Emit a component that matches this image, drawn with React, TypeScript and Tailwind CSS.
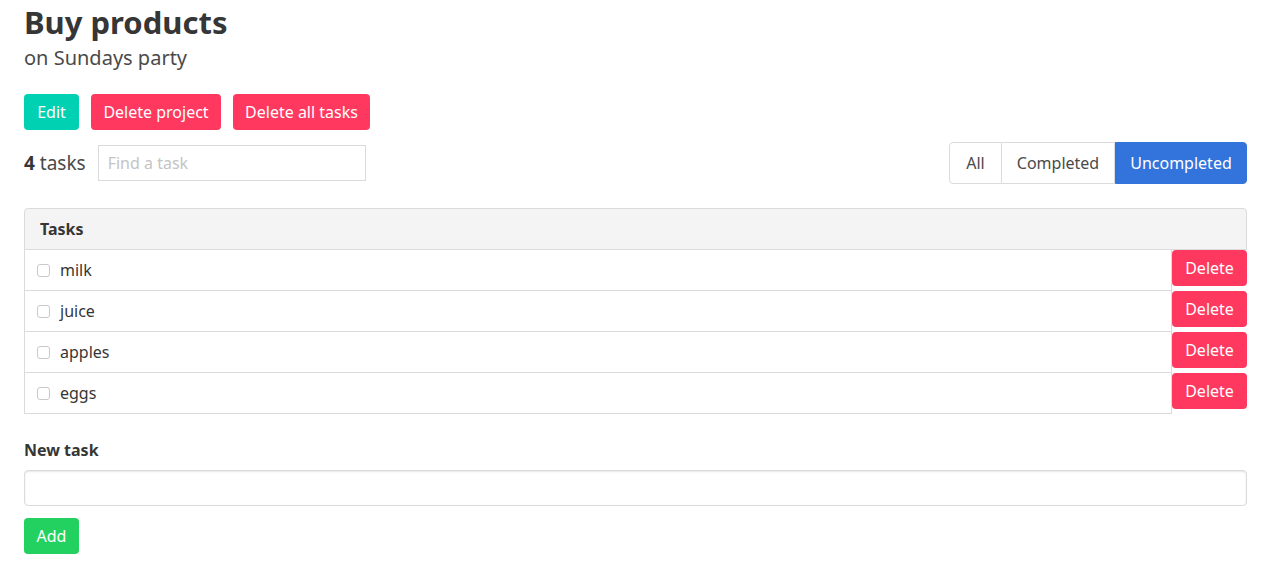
import React, { useState } from 'react';

type Task = { id: number; name: string; done: boolean };

const initialTasks: Task[] = [
  { id: 1, name: 'milk', done: false },
  { id: 2, name: 'juice', done: false },
  { id: 3, name: 'apples', done: false },
  { id: 4, name: 'eggs', done: false },
];

const filters = [
  { name: 'All', width: 'w-[53px]' },
  { name: 'Completed', width: 'w-[113px]' },
  { name: 'Uncompleted', width: 'w-[132px]' },
];

const App: React.FC = () => {
  const [tasks, setTasks] = useState<Task[]>(initialTasks);
  const [filter, setFilter] = useState('Uncompleted');
  const [query, setQuery] = useState('');
  const [newTask, setNewTask] = useState('');

  const visible = tasks.filter(t => {
    if (filter === 'Completed' && !t.done) return false;
    if (filter === 'Uncompleted' && t.done) return false;
    return t.name.toLowerCase().includes(query.toLowerCase());
  });

  const addTask = () => {
    if (!newTask.trim()) return;
    setTasks([...tasks, { id: Date.now(), name: newTask.trim(), done: false }]);
    setNewTask('');
  };

  return (
    <div className="min-h-screen bg-white pl-6 pr-10 pt-[4px] font-['Noto_Sans',sans-serif] text-[16px] text-[#4a4a4a]">
      <h1 className="text-[31px] font-bold leading-[36px] text-[#363636]">Buy products</h1>
      <h2 className="mt-[5px] text-[20px] leading-[25px] text-[#4a4a4a]">on Sundays party</h2>

      <div className="mt-[24px] flex gap-3">
        <button className="h-9 w-[55px] rounded-[4px] bg-[#00d1b2] text-white">Edit</button>
        <button className="h-9 w-[130px] rounded-[4px] bg-[#ff3860] text-white">Delete project</button>
        <button className="h-9 w-[137px] rounded-[4px] bg-[#ff3860] text-white">Delete all tasks</button>
      </div>

      <div className="mt-3 flex items-center justify-between">
        <div className="flex items-center">
          <span className="text-[19px] text-[#4a4a4a]">
            <strong className="font-bold text-[#363636]">4</strong> tasks
          </span>
          <input
            value={query}
            onChange={e => setQuery(e.target.value)}
            placeholder="Find a task"
            className="ml-3 h-9 w-[268px] border border-[#dbdbdb] px-[9px] text-[16px] text-[#363636] outline-none placeholder:text-[#c4c4c4]"
          />
        </div>
        <div className="flex h-[42px] rounded-[4px]">
          {filters.map((f, i) => {
            const active = f.name === filter;
            return (
              <button
                key={f.name}
                onClick={() => setFilter(f.name)}
                className={`h-full ${f.width} ${i === 0 ? 'rounded-l-[4px]' : ''} ${i === filters.length - 1 ? 'rounded-r-[4px]' : ''} ${
                  active
                    ? 'border border-[#3273dc] bg-[#3273dc] text-white'
                    : `border border-[#dbdbdb] text-[#4a4a4a] ${i > 0 ? 'border-l-0' : ''}`
                }`}
              >
                {f.name}
              </button>
            );
          })}
        </div>
      </div>

      <div className="mt-6">
        <div className="h-[42px] rounded-t-[4px] border border-[#dbdbdb] bg-[#f4f4f4] px-[15px] py-[10px] text-[16px] font-bold leading-[20px] text-[#363636]">
          Tasks
        </div>
        {visible.map(t => (
          <div key={t.id} className="flex">
            <label className="flex h-[41px] flex-1 items-center border-x border-b border-[#dbdbdb] pl-3 text-[#363636]">
              <input
                type="checkbox"
                checked={t.done}
                onChange={() => setTasks(tasks.map(x => (x.id === t.id ? { ...x, done: !x.done } : x)))}
                className="mr-[10px] h-[13px] w-[13px] appearance-none rounded-[3px] border border-[#c9c9c9] bg-white checked:bg-[#3273dc]"
              />
              {t.name}
            </label>
            <div className="w-[75px]">
              <button
                onClick={() => setTasks(tasks.filter(x => x.id !== t.id))}
                className="h-9 w-full rounded-[4px] bg-[#ff3860] text-white"
              >
                Delete
              </button>
            </div>
          </div>
        ))}
      </div>

      <label className="mt-[24px] block text-[16px] font-bold leading-6 text-[#363636]">New task</label>
      <input
        value={newTask}
        onChange={e => setNewTask(e.target.value)}
        className="mt-2 block h-9 w-full rounded-[4px] border border-[#dbdbdb] px-3 shadow-[inset_0_1px_2px_rgba(10,10,10,0.1)] outline-none"
      />
      <button onClick={addTask} className="mt-3 h-9 w-[55px] rounded-[4px] bg-[#23d160] text-white">
        Add
      </button>
    </div>
  );
};

export default App;
